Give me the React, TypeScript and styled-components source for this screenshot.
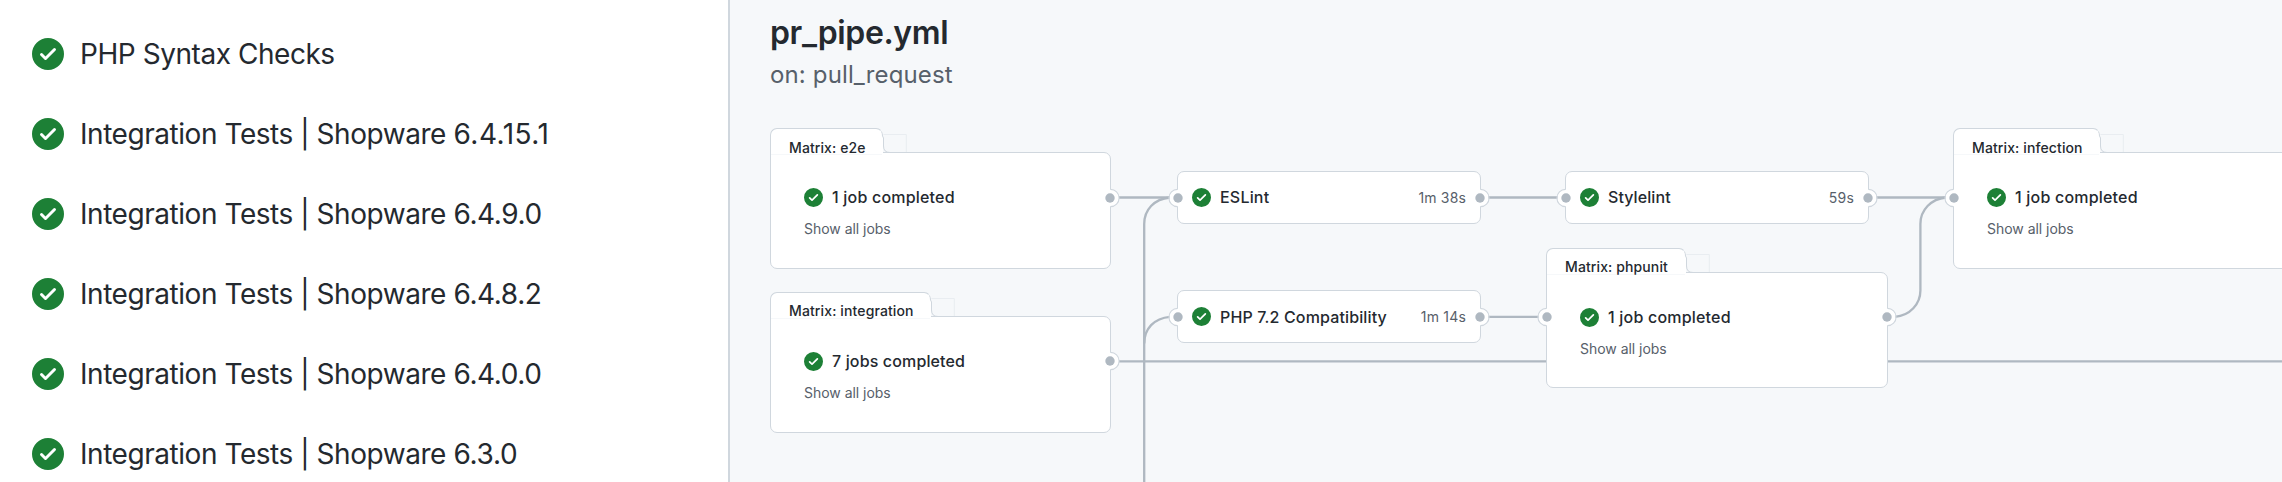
import React from 'react';
import styled, { createGlobalStyle } from 'styled-components';

const colors = {
  text: '#24292f',
  muted: '#57606a',
  border: '#d0d7de',
  faint: '#e9edf1',
  canvas: '#f6f8fa',
  edge: '#afb8c1',
  success: '#1d8036',
};

const GlobalStyle = createGlobalStyle`
  * { box-sizing: border-box; }
  body {
    margin: 0;
    overflow: hidden;
    background: #fff;
    color: ${colors.text};
    font-family: Inter, "Liberation Sans", sans-serif;
  }
`;

const Page = styled.div`
  display: flex;
  width: 2282px;
  height: 482px;
  overflow: hidden;
`;

const Sidebar = styled.ul`
  flex: 0 0 728px;
  margin: 0;
  padding: 14px 0 0 32px;
  list-style: none;
`;

const SidebarItem = styled.li`
  display: flex;
  align-items: center;
  gap: 16px;
  height: 80px;
`;

const SidebarLabel = styled.span`
  font-size: 28px;
  line-height: 40px;
  letter-spacing: -0.45px;
  white-space: nowrap;
`;

const Version = styled.span<{ $spacing: number }>`
  letter-spacing: ${(p) => p.$spacing}px;
`;

const Main = styled.main`
  position: relative;
  flex: 1;
  min-width: 0;
  overflow: hidden;
  border-left: 2px solid ${colors.border};
  background: ${colors.canvas};
`;

const Header = styled.header`
  padding: 9px 0 0 40px;
`;

const Title = styled.h1`
  margin: 0;
  font-size: 32px;
  font-weight: 600;
  line-height: 48px;
  letter-spacing: -0.36px;
`;

const Trigger = styled.p`
  margin: 0;
  color: ${colors.muted};
  font-size: 24px;
  line-height: 36px;
  letter-spacing: 0.14px;
`;

const Edges = styled.svg`
  position: absolute;
  inset: 0;
  width: 1552px;
  height: 482px;
  fill: none;
  stroke: ${colors.edge};
  stroke-width: 2.33;
`;

const Node = styled.div<{ $x: number; $y: number; $width: number }>`
  position: absolute;
  left: ${(p) => p.$x}px;
  top: ${(p) => p.$y}px;
  width: ${(p) => p.$width}px;
`;

const JobBox = styled.div`
  display: flex;
  align-items: center;
  height: 53px;
  padding: 0 14px;
  border: 1px solid ${colors.border};
  border-radius: 7px;
  background: #fff;
`;

const TabRow = styled.div`
  position: relative;
  z-index: 1;
  display: flex;
  height: 27px;
  margin-bottom: -3px;
`;

const Tab = styled.div<{ $width: number; $spacing: number; $top: number }>`
  width: ${(p) => p.$width}px;
  height: 27px;
  padding: ${(p) => p.$top}px 0 0 18px;
  overflow: hidden;
  border: 1px solid ${colors.border};
  border-bottom: 0;
  border-right-color: transparent;
  border-radius: 7px 7px 0 0;
  background: linear-gradient(${colors.canvas}, ${colors.canvas}) 0 100% / 100% 1px no-repeat, #fff;
  background-clip: padding-box;
  font-size: 14px;
  font-weight: 500;
  line-height: 20px;
  letter-spacing: ${(p) => p.$spacing}px;
  white-space: nowrap;
`;

const Notch = styled.svg`
  width: 27px;
  height: 27px;
  margin-left: -3px;
  fill: none;
`;

const MatrixBox = styled.div<{ $height: number }>`
  display: flex;
  flex-direction: column;
  gap: 8px;
  height: ${(p) => p.$height}px;
  padding: 32px 33px 0;
  border: 1px solid ${colors.border};
  border-radius: 0 7px 7px 7px;
  background: #fff;
`;

const JobRow = styled.div`
  display: flex;
  flex: 1;
  align-items: center;
  gap: 9px;
  min-width: 0;
`;

const MatrixRow = styled(JobRow)`
  flex: 0 0 24px;
`;

const JobName = styled.span<{ $spacing: number; $lift?: boolean }>`
  margin-top: ${(p) => (p.$lift ? -1 : 0)}px;
  font-size: 16px;
  font-weight: 500;
  line-height: 24px;
  letter-spacing: ${(p) => p.$spacing}px;
  white-space: nowrap;
`;

const Duration = styled.span<{ $spacing: number }>`
  color: ${colors.muted};
  font-size: 14px;
  line-height: 20px;
  letter-spacing: ${(p) => p.$spacing}px;
`;

const ShowAll = styled.span`
  color: ${colors.muted};
  font-size: 14px;
  line-height: 24px;
  letter-spacing: -0.03px;
`;

const PortMark = styled.svg<{ $side: 'left' | 'right'; $y: number }>`
  position: absolute;
  top: ${(p) => p.$y - 10}px;
  ${(p) => p.$side}: -9px;
  width: 20px;
  height: 20px;
`;

function CheckIcon({ size }: { size: number }) {
  return (
    <svg width={size} height={size} viewBox="0 0 16 16" fill={colors.success}>
      <path d="M8 16A8 8 0 1 1 8 0a8 8 0 0 1 0 16Zm3.78-9.72a.751.751 0 0 0-.018-1.042.751.751 0 0 0-1.042-.018L6.75 9.19 5.28 7.72a.751.751 0 0 0-1.042.018.751.751 0 0 0-.018 1.042l2 2a.75.75 0 0 0 1.06 0Z" />
    </svg>
  );
}

function Port({ side, y }: { side: 'left' | 'right'; y: number }) {
  return (
    <PortMark $side={side} $y={y} viewBox="0 0 20 20">
      <circle cx="10" cy="10" r="8.6" fill="#fff" />
      <path
        d={side === 'right' ? 'M10.5 1.4A8.6 8.6 0 0 1 10.5 18.6' : 'M9.5 1.4A8.6 8.6 0 0 0 9.5 18.6'}
        fill="none"
        stroke={colors.border}
        strokeWidth="1.1"
      />
      <circle cx="10" cy="10" r="4.7" fill={colors.edge} />
    </PortMark>
  );
}

interface JobProps {
  x: number;
  y: number;
  width?: number;
  name: string;
  time: string;
  spacing: number;
  timeSpacing: number;
  portY?: number;
  lift?: boolean;
}

function Job({ x, y, width = 304, name, time, spacing, timeSpacing, portY = 26.5, lift }: JobProps) {
  return (
    <Node $x={x} $y={y} $width={width}>
      <JobBox>
        <JobRow>
          <CheckIcon size={19} />
          <JobName $spacing={spacing} $lift={lift}>{name}</JobName>
        </JobRow>
        <Duration $spacing={timeSpacing}>{time}</Duration>
      </JobBox>
      <Port side="left" y={portY} />
      <Port side="right" y={portY} />
    </Node>
  );
}

interface MatrixProps {
  x: number;
  y: number;
  width?: number;
  height?: number;
  tabWidth: number;
  label: string;
  labelSpacing: number;
  labelTop?: number;
  status: string;
  statusSpacing: number;
  portY?: number;
  ports: Array<'left' | 'right'>;
}

function Matrix(props: MatrixProps) {
  const { x, y, width = 341, height = 117, tabWidth, label, labelSpacing, labelTop = 9, status, statusSpacing, portY = 69.5, ports } = props;
  return (
    <Node $x={x} $y={y} $width={width}>
      <TabRow>
        <Tab $width={tabWidth} $spacing={labelSpacing} $top={labelTop}>{label}</Tab>
        <Notch viewBox="0 0 27 27">
          <path d="M3.5 6.5H26.3V24" stroke={colors.faint} />
          <path d="M2.5 4V26" stroke="#fff" />
          <path d="M1.5 3.5Q2.5 5 2.5 8L3.5 10V18Q3.5 24.5 10 24.5H27" stroke={colors.border} />
        </Notch>
      </TabRow>
      <MatrixBox $height={height}>
        <MatrixRow>
          <CheckIcon size={19} />
          <JobName $spacing={statusSpacing}>{status}</JobName>
        </MatrixRow>
        <ShowAll>Show all jobs</ShowAll>
      </MatrixBox>
      {ports.map((side) => (
        <Port key={side} side={side} y={portY} />
      ))}
    </Node>
  );
}

const checks = [
  { label: 'PHP Syntax Checks', version: '', spacing: 0 },
  { label: 'Integration Tests | Shopware ', version: '6.4.15.1', spacing: 0.5 },
  { label: 'Integration Tests | Shopware ', version: '6.4.9.0', spacing: -0.4 },
  { label: 'Integration Tests | Shopware ', version: '6.4.8.2', spacing: -0.4 },
  { label: 'Integration Tests | Shopware ', version: '6.4.0.0', spacing: -0.4 },
  { label: 'Integration Tests | Shopware ', version: '6.3.0', spacing: -0.3 },
];

export default function App() {
  return (
    <Page>
      <GlobalStyle />
      <Sidebar>
        {checks.map((check) => (
          <SidebarItem key={check.label + check.version}>
            <CheckIcon size={32} />
            <SidebarLabel>
              {check.label}
              {check.version && <Version $spacing={check.spacing}>{check.version}</Version>}
            </SidebarLabel>
          </SidebarItem>
        ))}
      </Sidebar>
      <Main>
        <Header>
          <Title>pr_pipe.yml</Title>
          <Trigger>on: pull_request</Trigger>
        </Header>
        <Edges viewBox="730 0 1552 482">
          <path d="M1119 197.5H1170" />
          <path d="M1170 197.5C1154 199 1144.2 210 1144.2 224V482" />
          <path d="M1170 316.8C1154 318 1144.2 329 1144.2 343.5" />
          <path d="M1488 197.5H1558" />
          <path d="M1488 316.8H1540" />
          <path d="M1876 197.5H1946" />
          <path d="M1895 316.8C1910 315.5 1920.4 304 1920.4 290.5V224C1920.4 210 1931 199 1946 197.5" />
          <path d="M1119 361.3H2282" />
        </Edges>
        <Matrix x={40} y={128} tabWidth={113} label="Matrix: e2e" labelSpacing={0.1}
          status="1 job completed" statusSpacing={0.2} ports={['right']} />
        <Matrix x={40} y={292} tabWidth={161} label="Matrix: integration" labelSpacing={0.12} labelTop={8}
          status="7 jobs completed" statusSpacing={0.14} portY={69.3} ports={['right']} />
        <Job x={447} y={171} name="ESLint" time="1m 38s" spacing={0.2} timeSpacing={0.15} lift />
        <Job x={447} y={290} name="PHP 7.2 Compatibility" time="1m 14s" spacing={0.14} timeSpacing={0.2} portY={26.8} />
        <Job x={835} y={171} name="Stylelint" time="59s" spacing={0.08} timeSpacing={0.2} lift />
        <Matrix x={816} y={248} width={342} height={116} tabWidth={140} label="Matrix: phpunit" labelSpacing={0.11} labelTop={8}
          status="1 job completed" statusSpacing={0.2} portY={68.8} ports={['left', 'right']} />
        <Matrix x={1223} y={128} tabWidth={147} label="Matrix: infection" labelSpacing={0.11}
          status="1 job completed" statusSpacing={0.2} ports={['left']} />
      </Main>
    </Page>
  );
}
